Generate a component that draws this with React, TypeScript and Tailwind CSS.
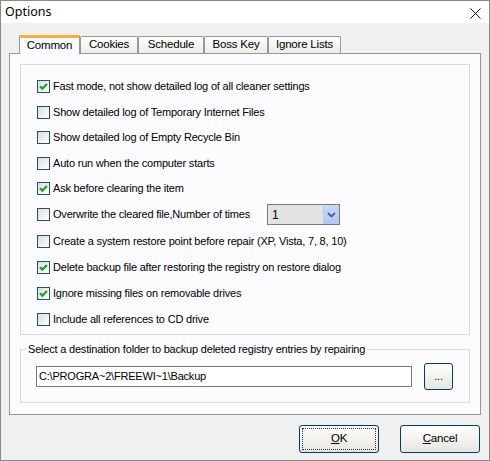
import React from "react"

const ui = { fontFamily: '"Liberation Sans", Arial, sans-serif' }

const options = [
  { label: "Fast mode, not show detailed log of all cleaner settings", checked: true, h: "h-[25px]" },
  { label: "Show detailed log of Temporary Internet Files", checked: false, h: "h-[26px]" },
  { label: "Show detailed log of Empty Recycle Bin", checked: false, h: "h-[25px]" },
  { label: "Auto run when the computer starts", checked: false, h: "h-[26px]" },
  { label: "Ask before clearing the item", checked: true, h: "h-[25px]" },
  { label: "Overwrite the cleared file,Number of times", checked: false, h: "h-[27px]", select: true },
  { label: "Create a system restore point before repair (XP, Vista, 7, 8, 10)", checked: false, h: "h-[26px]" },
  { label: "Delete backup file after restoring the registry on restore dialog", checked: true, h: "h-[27px]" },
  { label: "Ignore missing files on removable drives", checked: true, h: "h-[25px]" },
  { label: "Include all references to CD drive", checked: false, h: "h-[26px]" },
]

const tabs = [
  { name: "Common", w: "w-[61px]" },
  { name: "Cookies", w: "w-[58px]" },
  { name: "Schedule", w: "w-[66px]" },
  { name: "Boss Key", w: "w-[64px]" },
  { name: "Ignore Lists", w: "w-[73px]" },
]

function CheckBox({ checked }: { checked: boolean }) {
  return (
    <span className="w-[13px] h-[13px] shrink-0 border border-[#1c5180] bg-gradient-to-br from-[#dcdcd7] to-[#ffffff] grid place-items-center">
      {checked && (
        <svg width="9" height="9" viewBox="0 0 9 9">
          <path d="M1 4.2 L3.4 6.6 L8 2" fill="none" stroke="#21a121" strokeWidth="2.2" />
        </svg>
      )}
    </span>
  )
}

function Select() {
  return (
    <div className="w-[73px] h-[21px] border border-[#7a7a7a] bg-[#e3e3e3] flex items-center">
      <span className="flex-1 pl-[4px] text-[12px] text-black">1</span>
      <span className="w-[16px] h-full bg-gradient-to-b from-[#c9d8fc] to-[#b0c6f7] border-l border-[#b9c9ef] grid place-items-center">
        <svg width="9" height="6" viewBox="0 0 9 6">
          <path d="M1 1 L4.5 4.5 L8 1" fill="none" stroke="#4d6185" strokeWidth="1.8" />
        </svg>
      </span>
    </div>
  )
}

function Button({ children, focused }: { children: React.ReactNode; focused?: boolean }) {
  return (
    <button className="w-[80px] h-[28px] rounded-[3px] border border-[#003c74] bg-gradient-to-b from-[#ffffff] to-[#e6e5de] p-[2px] text-[11.5px] text-black">
      <span className={`w-full h-full flex items-center justify-center ${focused ? "border border-dotted border-[#333]" : ""}`}>
        {children}
      </span>
    </button>
  )
}

export default function App() {
  return (
    <div className="w-[490px] h-[461px] bg-[#f0f0f0] border border-[#8a8a8a] flex flex-col" style={ui}>
      <div className="h-[22px] bg-white flex items-center justify-between pl-[4px] pr-[8px] shrink-0">
        <span className="text-[12.5px] text-black" style={{ fontFamily: '"Noto Sans", "Open Sans", sans-serif' }}>Options</span>
        <svg width="11" height="11" viewBox="0 0 11 11" className="mt-[2px]">
          <path d="M0.5 0.5 L10.5 10.5 M10.5 0.5 L0.5 10.5" stroke="#111" strokeWidth="1" />
        </svg>
      </div>

      <div className="px-[8px] pt-[11px] text-[11px] tracking-[-0.2px]">
        <div className="flex items-end pl-[10px] h-[19px]">
          {tabs.map((t, i) =>
            i === 0 ? (
              <div
                key={t.name}
                className={`${t.w} h-[19px] -mb-px relative z-10 bg-[#fcfcfe] border-x border-[#919b9c] border-t-[3px] border-t-[#f8b03c] flex items-center justify-center text-[11.5px] text-black`}
              >
                {t.name}
              </div>
            ) : (
              <div
                key={t.name}
                className={`${t.w} h-[17px] bg-gradient-to-b from-[#ffffff] to-[#ecebe5] border border-b-0 border-[#919b9c] rounded-t-[2px] flex items-center justify-center text-[11.5px] text-black`}
              >
                {t.name}
              </div>
            )
          )}
        </div>

        <div className="h-[362px] border border-[#919b9c] bg-[#fcfcfe] px-[10px] pt-[10px] flex flex-col">
          <div className="h-[271px] border border-[#dcdcdc] pt-[9px] pl-[16px] flex flex-col">
            {options.map((o) => (
              <div key={o.label} className={`${o.h} flex items-center gap-[3px] text-black`}>
                <CheckBox checked={o.checked} />
                <span className={`whitespace-nowrap ${o.select ? "w-[211px]" : ""}`}>{o.label}</span>
                {o.select && <Select />}
              </div>
            ))}
          </div>

          <fieldset className="mt-[7px] border border-[#dcdcdc] pb-[12px] pl-[15px] pr-[16px]">
            <legend className="ml-[-10px] px-[2px] text-black leading-[14px]">
              Select a destination folder to backup deleted registry entries by repairing
            </legend>
            <div className="flex items-center gap-[12px] pt-[7px]">
              <div className="w-[376px] h-[21px] border border-[#7a7a7a] bg-white flex items-center pl-[2px] text-black">
                C:\PROGRA~2\FREEWI~1\Backup
              </div>
              <button className="w-[29px] h-[27px] rounded-[3px] border border-[#003c74] bg-gradient-to-b from-[#ffffff] to-[#e6e5de] text-black">
                ...
              </button>
            </div>
          </fieldset>
        </div>

        <div className="flex justify-end gap-[21px] mt-[10px] pr-[1px]">
          <Button focused>
            <span className="underline">O</span>K
          </Button>
          <Button>
            <span className="underline">C</span>ancel
          </Button>
        </div>
      </div>
    </div>
  )
}
